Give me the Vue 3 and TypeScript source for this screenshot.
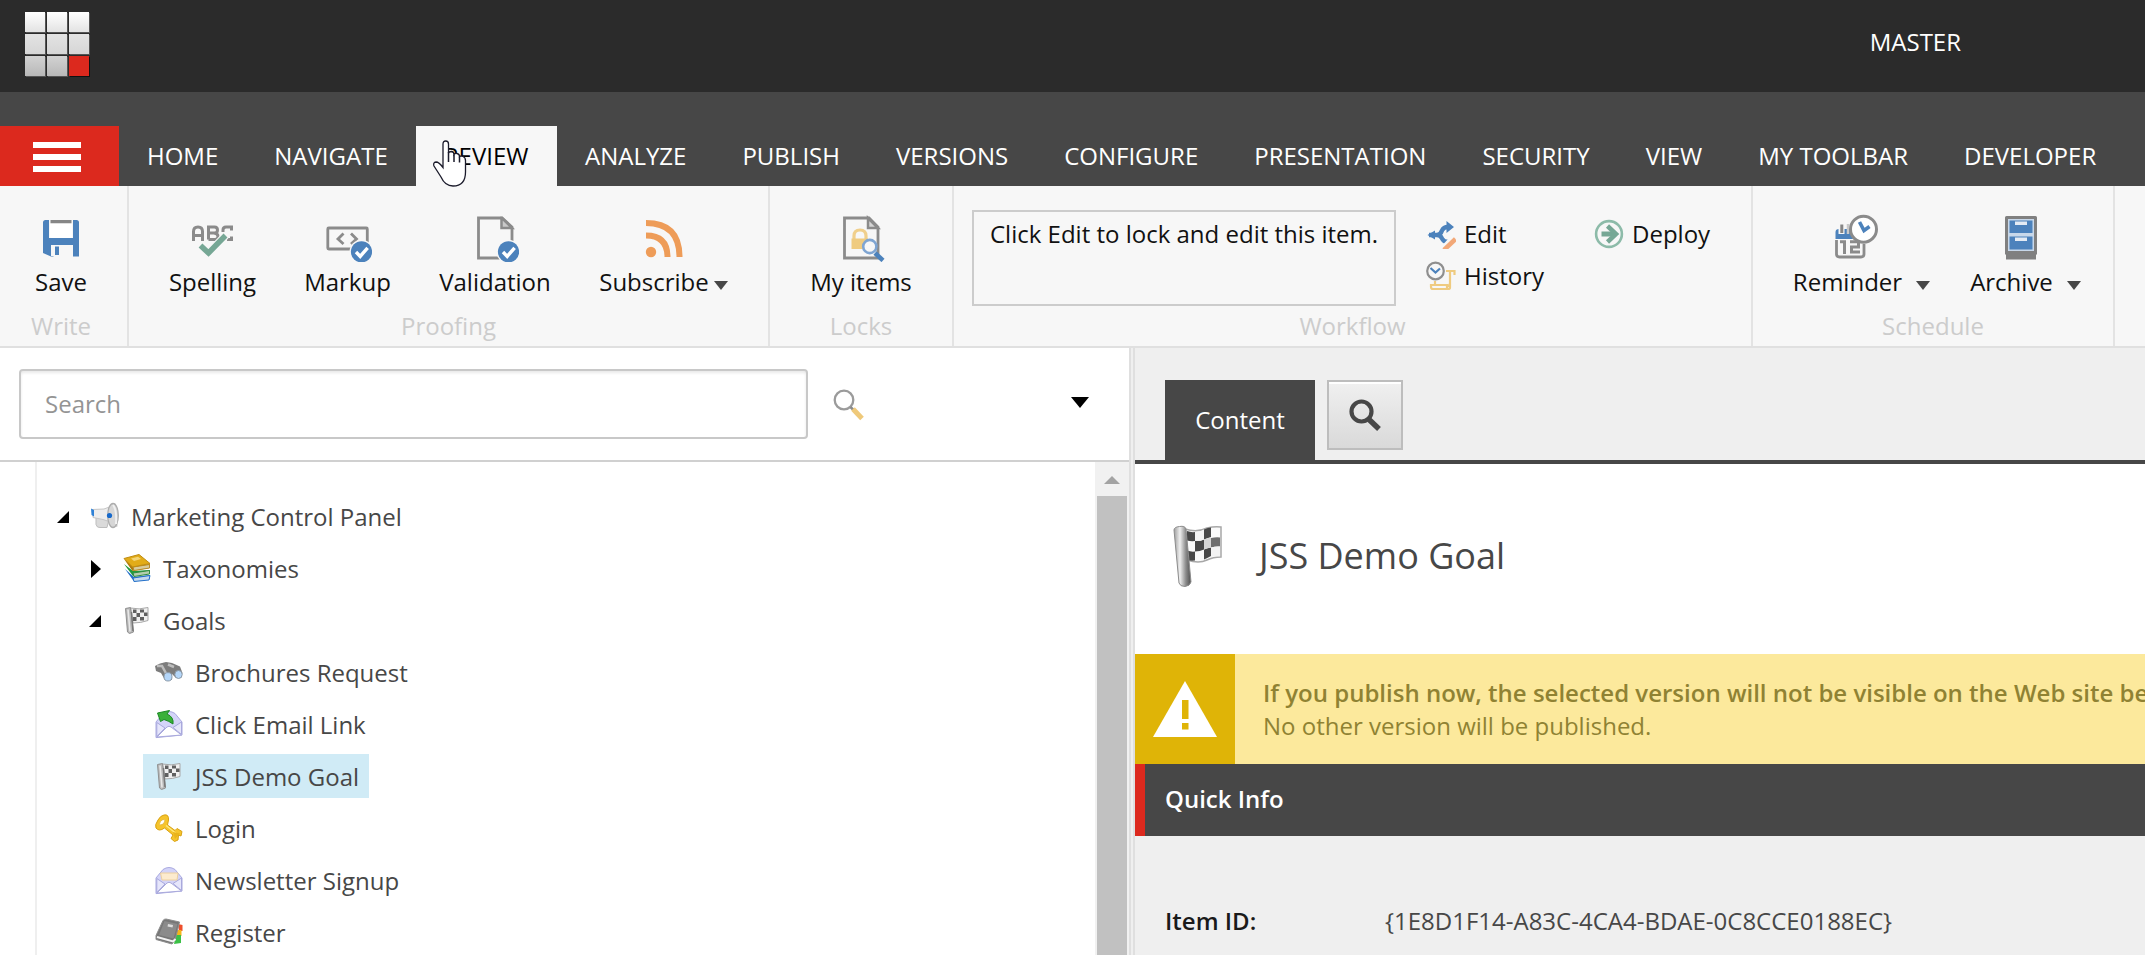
<script setup lang="ts">
interface TreeNode {
  label: string
  icon: string
  level: number
  state?: 'open' | 'closed'
  selected?: boolean
}

const tabs: string[] = [
  'HOME', 'NAVIGATE', 'REVIEW', 'ANALYZE', 'PUBLISH', 'VERSIONS', 'CONFIGURE',
  'PRESENTATION', 'SECURITY', 'VIEW', 'MY TOOLBAR', 'DEVELOPER',
]
const activeTab = 'REVIEW'

const tree: TreeNode[] = [
  { label: 'Marketing Control Panel', icon: 'megaphone', level: 0, state: 'open' },
  { label: 'Taxonomies', icon: 'books', level: 1, state: 'closed' },
  { label: 'Goals', icon: 'flag', level: 1, state: 'open' },
  { label: 'Brochures Request', icon: 'binoculars', level: 2 },
  { label: 'Click Email Link', icon: 'mailArrow', level: 2 },
  { label: 'JSS Demo Goal', icon: 'flag', level: 2, selected: true },
  { label: 'Login', icon: 'key', level: 2 },
  { label: 'Newsletter Signup', icon: 'mail', level: 2 },
  { label: 'Register', icon: 'notebook', level: 2 },
]

const badge = `<circle cx="37.5" cy="37.8" r="10.6" fill="#4c82bc"/><path d="M32 38l4.2 4.4 7.4-8.6" fill="none" stroke="#fff" stroke-width="3.4"/>`
const envelope = `<path d="M1 12 8 3.5Q14-.5 20 3.5L27 12V25L1 27.6Z" fill="#d4d4f8" stroke="#a9a9e0"/><path d="M1.8 12.5 10 18 1.8 26.5Z M26.5 12 18 17.5 26.5 24.5Z" fill="#e6e6fb" stroke="#a9a9dc"/><path d="M2 27 12 17Q14 15.5 16 17L26.5 25Z" fill="#fff" stroke="#a9a9dc"/>`

/* Ribbon icons use a 48-unit box, tree icons a 28-unit box. */
const icons: Record<string, string> = {
  save: `<path d="M6.5 6H12V24H36V6H39.5Q42 6 42 8.500V42.500H36V31H16.500V42.500H14L6 39V8.500Q6 6 8.500 6Z" fill="#4c82bc"/><path d="M13.500 6H34.500V9.500H13.500Z" fill="#868686"/><path d="M13 9.500H35V22.500Q35 24 33.500 24H14.500Q13 24 13 22.500Z" fill="#fff"/><path d="M14 31H33V42H14Z" fill="#f7f7f7"/><path d="M18 32.500H22V41H18Z" fill="#4c82bc"/>`,
  spelling: `<g fill="none" stroke="#8b8b8b" stroke-width="3"><path d="M4.500 27V17.500Q4.500 13 9 13Q13.500 13 13.500 17.500V27M4.500 21.500H13.500M19.500 25.500V13H25.500Q28.500 13 28.500 16Q28.500 19 25.500 19H19.500M25 19Q29 19.500 29 22.500Q29 25.500 25.500 25.500H19.500M34 18V16Q34 13 37 13H42.500V16.500M42.500 22.500V25.500H38"/></g><path d="M12 31.500 19.500 39.500 36.500 21.500" fill="none" stroke="#f7f7f7" stroke-width="8"/><path d="M11.500 31.500 19.500 39 36.500 21.500" fill="none" stroke="#76a795" stroke-width="5.500"/>`,
  markup: `<rect x="3.800" y="14" width="39.500" height="21" rx="1" fill="none" stroke="#8b8b8b" stroke-width="2.800"/><path d="M19.500 19.500 14 25 19.500 30M27 19.500 32.500 25 27 30" fill="none" stroke="#8b8b8b" stroke-width="2.800"/><circle cx="37.500" cy="37.800" r="12" fill="#f7f7f7"/>${badge}`,
  validation: `<path d="M7.500 4H31L41 13V44H7.500Z" fill="none" stroke="#8b8b8b" stroke-width="2.800"/><path d="M30.500 4V14H41L31 4Z" fill="#c9c9c9" stroke="#8b8b8b" stroke-width="2.500"/><circle cx="37.500" cy="37.800" r="12" fill="#f7f7f7"/>${badge}`,
  subscribe: `<circle cx="11" cy="38" r="5.200" fill="#ee9c58"/><path d="M6 21.500Q27.500 21.500 27.500 43M6 9Q39.500 9 39.500 43" fill="none" stroke="#ee9c58" stroke-width="6"/>`,
  lockdoc: `<path d="M7.500 4H32L41 13V44H7.500Z" fill="none" stroke="#8b8b8b" stroke-width="2.800"/><path d="M31 4V14H41Z" fill="#d5d5d5" stroke="#8b8b8b" stroke-width="2.500"/><path d="M17 25V22Q17 16 23 16Q29 16 29 22V25" fill="none" stroke="#f0cf8b" stroke-width="3.200"/><path d="M14.500 24.500H31V35H14.500Z" fill="#efcb80"/><circle cx="32.800" cy="32.500" r="6.600" fill="#f7f7f7" stroke="#7fa5d2" stroke-width="2.600"/><path d="M38 39 46 46.500" stroke="#4c82bc" stroke-width="4.500"/>`,
  reminder: `<path d="M4.500 18Q4.500 15 8 15H19L22 25H4.500Z" fill="#4c82bc"/><path d="M10.500 9.500V20" stroke="#f7f7f7" stroke-width="6"/><path d="M10.800 10.500V19" stroke="#868686" stroke-width="3"/><path d="M17 10V20" stroke="#c9c9c9" stroke-width="2.500"/><path d="M5.500 26V40Q5.500 43 8.500 43H30Q33 43 33 40V30" fill="none" stroke="#8b8b8b" stroke-width="2.800"/><path d="M9 27.800H13.500V40M19 27.800H27.500V33H20.500V38H29" fill="none" stroke="#8b8b8b" stroke-width="3"/><circle cx="32.500" cy="15.200" r="13" fill="#fff" stroke="#8b8b8b" stroke-width="3"/><path d="M28.500 8 33 16.500 38.500 12.500" fill="none" stroke="#4c82bc" stroke-width="3.600"/>`,
  archive: `<path d="M8 3.500Q8 2 9.500 2H38.500Q40 2 40 3.500V40.500H39V45.500H9V40.500H8Z" fill="#808080"/><path d="M11 5H37V37H11Z" fill="#c8d8ea"/><path d="M12.500 6.500H35.500V19H12.500ZM12.500 22.500H35.500V35.500H12.500Z" fill="#4c82bc"/><path d="M18 7.500H30V11H18ZM18 23.500H30V27H18Z" fill="#e4ebf4"/>`,
  edit: `<path d="M3 16H12M11 16Q14.500 16 16 11.500Q17.500 8 22 8H23M11 16Q14.500 16 16 19.500Q17.500 23 22 23H26" fill="none" stroke="#4c82bc" stroke-width="4.400"/><path d="M1.500 16 9 11.500V20.500ZM20.500 2 28 8 20.500 14Z" fill="#4c82bc"/><path d="M30 16.500 18 29.500" stroke="#f7f7f7" stroke-width="7"/><path d="M29.500 20 18 31" stroke="#f2a878" stroke-width="4.500"/>`,
  history: `<path d="M20 10H28.500V14M24 11V22Q24 24 22 25M9 20V24M24 12V26.500Q24 28 22 28H7Q5 28 5 26V24H21V27" fill="none" stroke="#efcb80" stroke-width="2.200"/><circle cx="9.500" cy="10" r="9.500" fill="#f7f7f7"/><circle cx="9.500" cy="10" r="8.300" fill="#f7f7f7" stroke="#8f8f8f" stroke-width="2.200"/><path d="M4.500 7 9.500 11.500 14 7.500" fill="none" stroke="#4c82bc" stroke-width="2.200"/>`,
  deploy: `<circle cx="15" cy="15" r="12.900" fill="none" stroke="#8dbba9" stroke-width="2.600"/><path d="M7.500 15H20" stroke="#76a795" stroke-width="5"/><path d="M13.500 7 22 15 13.500 23" fill="none" stroke="#76a795" stroke-width="4.500"/>`,
  megaphone: `<path d="M5 15V22.500Q6 26 9 25.500H16L18 17Z" fill="#dadada" stroke="#bdbdbd"/><path d="M1.500 7.500 13 7Q19 5.500 24 1.500L26 24.500Q20 19 12 17.500L2 15.500Z" fill="#ededed" stroke="#c6c6c6"/><ellipse cx="22" cy="13.500" rx="5.300" ry="12" fill="#d6d6d6" stroke="#adadad" stroke-width="1.300"/><path d="M22 3Q26 8 25 22" fill="none" stroke="#f0f0f0" stroke-width="2"/><path d="M0 6.500 3 8V14.500L.5 13Z" fill="#2e81d6"/><circle cx="18.500" cy="13.500" r="2.600" fill="#1769cb"/>`,
  books: `<path d="M2 15 11 27.500 27 25V21L11 23Z" fill="#2370c9"/><path d="M10 24 27 21.500 26 26 11 27.500Z" fill="#c4d9ee" stroke="#2370c9"/><path d="M1 10 10 22 27 19.500V16L10 17Z" fill="#219a3d"/><path d="M10 19 26.500 16.500V20L11 22.500Z" fill="#b4ceae" stroke="#2f8d3f"/><path d="M1 5 9.500 17 27 14V10L10 12Z" fill="#ad7a0d"/><path d="M10 13 26.500 10.500V14L11 16.500Z" fill="#d8cc9c" stroke="#b88b29"/><path d="M1 4.500 16 .5 27 9.500 9.500 13Z" fill="#e2ac18" stroke="#c08c10"/><path d="M8 4.500 15 2.700 18 5 11 7Z" fill="#f3d577"/>`,
  flag: `<path d="M7.500 2Q16 4 25 1.500V14.500Q18 17 10 17Z" fill="#f0f0f0" stroke="#a8a8a8"/><path d="M10 3.500H13.500V7H10ZM17 3.500H21V6.500H17ZM13.500 7H17V11H13.500ZM21 6.500H24.500V10H21ZM10 11H13.500V15H10ZM17 11H21V14.500H17Z" fill="#606060"/><path d="M2.500 2.500 7.500 1.500 10.500 26 6.500 27.500 4.500 26Z" fill="#b8b8b8" stroke="#909090"/><path d="M5 3.500 7 25.500" stroke="#e8e8e8" stroke-width="1.600"/><path d="M8.500 6 10 25" stroke="#787878" stroke-width="1.500"/>`,
  binoculars: `<path d="M0 8 5 5.500 11 4 17 5 25 8.500 27.500 15 26 20 21 20 17 16 17 22 10 22 6 15 1 13Z" fill="#7c7c7c"/><path d="M2 8 7 8 12 17M13 6.500 19 9" fill="none" stroke="#bdbdbd" stroke-width="2.500"/><ellipse cx="13" cy="18.800" rx="4" ry="4.200" fill="#b4d6f9" stroke="#8c9aa8"/><ellipse cx="23.500" cy="16.500" rx="3.700" ry="4" fill="#b4d6f9" stroke="#8c9aa8"/>`,
  mailArrow: `${envelope}<path d="M2.500 3 14.500.5 12 4Q19 7 18 14Q14 11 9 9.500L5.500 11.500Z" fill="#3ab03a" stroke="#1c8a24"/>`,
  mail: `${envelope}<path d="M5.500 7H23L22 14H7Z" fill="#fdebce" stroke="#ecd0a0"/>`,
  key: `<path d="M9 1Q14 0 13.500 6L12.500 11 20 16.500 22 14.500 27 17.500 26 22 23.500 21 23 26 19.500 27.500 16 24.500 18 21 9.500 14Q4 18 1 14Q-.5 11 3 6Q5.500 1.500 9 1Z" fill="#f6c42c" stroke="#d9a212"/><path d="M9 5.500Q10.500 5.500 9.500 8Q8 11 5.500 11Q3.500 10.500 5.500 7.500Q7 5.500 9 5.500Z" fill="#fff" stroke="#e0b23a" stroke-width=".8"/><path d="M11 11.500 21 19.500" stroke="#fde87c" stroke-width="1.500"/><path d="M18 18 25 19.500 20 25Z" fill="#eab41c"/>`,
  notebook: `<path d="M23 6 27.500 7V13L24 13Z" fill="#ee4f2c"/><path d="M22 12H26.500V18H21Z" fill="#f5b51b"/><path d="M21 17H26V25L19 26Z" fill="#3cc047"/><path d="M8 2.500Q9 1 11 1L24.500 4 20 22.500 17 26 1 21.500V17.500Z" fill="#777" stroke="#8d8d8d"/><path d="M9.500 3 22.500 6 18.500 20.500 4 17Z" fill="#8b8b8b"/><path d="M2 19 18 23.500 20.500 21" fill="none" stroke="#f3f3f3" stroke-width="2"/><path d="M13 6 18 7 17.500 9.500 12.500 8.500Z" fill="#ddd"/>`,
}
</script>

<template>
  <div class="app">
    <header class="topbar">
      <div class="logo">
        <span v-for="n in 9" :key="n" :class="['cell', `row${Math.ceil(n / 3)}`, { red: n === 9 }]"></span>
      </div>
      <span class="database">MASTER</span>
    </header>

    <nav class="tabs">
      <button class="menu" aria-label="Menu"><i></i><i></i><i></i></button>
      <div v-for="tab in tabs" :key="tab" :class="['tab', { active: tab === activeTab }]">
        {{ tab }}
        <svg v-if="tab === activeTab" class="cursor" viewBox="0 0 34 48">
          <path
            d="M10 26V5Q10 2 12.700 2Q15.500 2 15.500 5V14Q16 12.500 18.500 12.500Q21 12.800 21 15.500Q22 14 24 14.500Q26.500 15 26.500 17.500Q28 16.500 30 17.500Q32.500 18.500 32.500 21.500V33Q32.500 47 20 47Q12 47 8 38L1 27Q-.2 23.500 3 23Q6 23 10 28.500Z"
            fill="#fff" stroke="#1b1b2b" stroke-width="1.300" />
          <path d="M15.500 13V23M21 15.500V23M26.500 17.500V23.500" fill="none" stroke="#1b1b2b" stroke-width="1.500" />
        </svg>
      </div>
    </nav>

    <section class="ribbon">
      <div class="group write">
        <div class="tools">
          <div class="tool w-save"><svg viewBox="0 0 48 48" v-html="icons.save"></svg><span>Save</span></div>
        </div>
        <div class="caption">Write</div>
      </div>
      <div class="group proofing">
        <div class="tools">
          <div class="tool w-spelling"><svg viewBox="0 0 48 48" v-html="icons.spelling"></svg><span>Spelling</span></div>
          <div class="tool w-markup"><svg viewBox="0 0 48 48" v-html="icons.markup"></svg><span>Markup</span></div>
          <div class="tool w-validation"><svg viewBox="0 0 48 48" v-html="icons.validation"></svg><span>Validation</span></div>
          <div class="tool w-subscribe"><svg viewBox="0 0 48 48" v-html="icons.subscribe"></svg><span class="near">Subscribe<i class="caret"></i></span></div>
        </div>
        <div class="caption">Proofing</div>
      </div>
      <div class="group locks">
        <div class="tools">
          <div class="tool w-items"><svg viewBox="0 0 48 48" v-html="icons.lockdoc"></svg><span>My items</span></div>
        </div>
        <div class="caption">Locks</div>
      </div>
      <div class="group workflow">
        <div class="flow">
          <div class="hint">Click Edit to lock and edit this item.</div>
          <div class="links">
            <div class="link"><svg viewBox="0 0 30 30" v-html="icons.edit"></svg>Edit</div>
            <div class="link"><svg viewBox="0 0 30 30" v-html="icons.history"></svg>History</div>
          </div>
          <div class="links">
            <div class="link"><svg viewBox="0 0 30 30" v-html="icons.deploy"></svg>Deploy</div>
          </div>
        </div>
        <div class="caption">Workflow</div>
      </div>
      <div class="group schedule">
        <div class="tools">
          <div class="tool w-reminder"><svg viewBox="0 0 48 48" v-html="icons.reminder"></svg><span>Reminder<i class="caret"></i></span></div>
          <div class="tool w-archive"><svg viewBox="0 0 48 48" v-html="icons.archive"></svg><span>Archive<i class="caret"></i></span></div>
        </div>
        <div class="caption">Schedule</div>
      </div>
    </section>

    <main class="body">
      <aside class="side">
        <div class="searchbar">
          <div class="searchbox">Search</div>
          <svg class="glass" viewBox="0 0 32 32">
            <circle cx="11" cy="11" r="9.300" fill="#fff" stroke="#9b9b9b" stroke-width="2.300" />
            <path d="M17.500 18 20.500 21" stroke="#8b8b8b" stroke-width="2.500" />
            <path d="M20 20 29 29.500" stroke="#efc97a" stroke-width="5" />
          </svg>
          <i class="dropdown"></i>
        </div>
        <div class="treewrap">
          <div class="tree">
            <div v-for="node in tree" :key="node.label" :class="['node', `level${node.level}`]">
              <span class="toggle">
                <svg v-if="node.state" viewBox="0 0 22 20">
                  <path v-if="node.state === 'open'" d="M12 4V16H0Z" />
                  <path v-else d="M2 1 12 10 2 19Z" />
                </svg>
              </span>
              <span :class="['item', { selected: node.selected }]">
                <svg viewBox="0 0 28 28" v-html="icons[node.icon]"></svg>
                <span class="label">{{ node.label }}</span>
              </span>
            </div>
          </div>
          <div class="scrollbar"><i class="up"></i><div class="thumb"></div></div>
        </div>
      </aside>
      <div class="splitter"></div>
      <section class="content">
        <div class="editor-tabs">
          <div class="editor-tab">Content</div>
          <div class="search-button">
            <svg viewBox="0 0 32 32">
              <circle cx="12.500" cy="12.500" r="10" fill="none" stroke="#474747" stroke-width="4.200" />
              <path d="M19.500 20 30 30" stroke="#474747" stroke-width="5.500" />
            </svg>
          </div>
        </div>
        <div class="title">
          <svg viewBox="0 0 50 64">
            <path d="M12 5Q24 9 34 4Q42 2 48 3V33Q40 33 34 36Q26 40 14 36Z" fill="#fafafa" stroke="#a8a8a8" stroke-width="1.500" />
            <path d="M14 7Q18 8.500 22 8V17Q18 17.500 14 16.500ZM31 5.500Q35 3.500 38 3.500V13Q34 14 31 15.500ZM22 17Q27 17.500 31 15.500V25.500Q27 27.500 22 27.500ZM14 26.500Q18 28 22 27.500V36.500Q18 37 14 36ZM31 25.500Q35 24 38 23.500V32Q34 34 31 35.500Z" fill="#484848" />
            <path d="M38 14Q43 13 47 13.500V22.500Q43 22 38 23.500Z" fill="#6e6e6e" />
            <path d="M31 15.500Q35 14 38 13.500V23.500Q34 24 31 25.500Z" fill="#d6d6d6" />
            <path d="M22 8Q27 8 31 5.500V15.500Q27 17.500 22 17ZM38 23.500Q43 22 47 22.500V32Q43 32 38 32.500Z" fill="#f3f3f3" />
            <defs>
              <linearGradient id="pole" x1="0" x2="1" y1="0" y2="0">
                <stop offset="0" stop-color="#9d9d9d" /><stop offset=".35" stop-color="#efefef" />
                <stop offset=".7" stop-color="#8b8b8b" /><stop offset="1" stop-color="#4d4d4d" />
              </linearGradient>
            </defs>
            <path d="M1 6Q1 3 6.500 2.500Q12 1.500 13 5L18 58Q17 62 12 62.500Q7 62.500 6 59Z" fill="url(#pole)" stroke="#8c8c8c" />
          </svg>
          <h1>JSS Demo Goal</h1>
        </div>
        <div class="warning">
          <div class="warning-icon">
            <svg viewBox="0 0 66 58">
              <path d="M33 1 65 57H1Z" fill="#fff" />
              <path d="M30 20H36.500V39H30ZM30 43H36.500V49.500H30Z" fill="#dfb407" />
            </svg>
          </div>
          <div class="warning-text">
            <b>If you publish now, the selected version will not be visible on the Web site be</b>
            <span>No other version will be published.</span>
          </div>
        </div>
        <div class="section-head">Quick Info</div>
        <dl class="info">
          <dt>Item ID:</dt>
          <dd>{1E8D1F14-A83C-4CA4-BDAE-0C8CCE0188EC}</dd>
        </dl>
      </section>
    </main>
  </div>
</template>

<style>
html, body { margin: 0; overflow: hidden; }
</style>

<style scoped>
.app {
  width: 2145px;
  height: 955px;
  display: flex;
  flex-direction: column;
  overflow: hidden;
  font: 24px/32px "Open Sans", "Noto Sans", sans-serif;
  color: #474747;
  background: #fff;
  white-space: nowrap;
}
.app *, .app { box-sizing: border-box; }

.topbar {
  flex: 0 0 92px;
  display: flex;
  align-items: flex-start;
  justify-content: space-between;
  padding: 12px 184px 0 25px;
  background: #2b2b2b;
  color: #fff;
}
.logo { display: grid; grid-template-columns: repeat(3, 20px); grid-auto-rows: 20px; gap: 2px; }
.cell { box-shadow: 1px 1px 0 #555; }
.row1 { background: linear-gradient(#fff, #e3e3e3); }
.row2 { background: linear-gradient(#e3e3e3, #d6d6d6); }
.row3 { background: linear-gradient(#d2d2d2, #b8b8b8); }
.cell.red { background: #dc291e; box-shadow: 1px 1px 0 #111; }
.database { margin-top: 14px; }

.tabs {
  flex: 0 0 94px;
  display: flex;
  padding-top: 34px;
  background: #474747;
  color: #fff;
}
.menu {
  width: 119px;
  padding: 1px 38px 0 33px;
  border: 0;
  background: #dc291e;
  display: flex;
  flex-direction: column;
  justify-content: center;
  gap: 6px;
}
.menu i { height: 6px; background: #fff; }
.tab { position: relative; padding: 0 28px; line-height: 60px; }
.tab.active { padding-right: 28.6px; background: #f7f7f7; color: #000; }
.cursor { position: absolute; left: 17px; top: 13px; width: 34px; height: 48px; }

.ribbon {
  flex: 0 0 162px;
  display: flex;
  background: #f7f7f7;
  border-bottom: 2px solid #e0e0e0;
  color: #111;
}
.group { flex: none; display: flex; flex-direction: column; border-right: 2px solid #e3e3e3; }
.write { width: 129px; }
.proofing { width: 641px; }
.locks { width: 184px; }
.workflow { width: 799px; }
.schedule { width: 362px; }
.tools, .flow { height: 124px; display: flex; align-items: flex-start; }
.tools { padding-top: 28px; }
.caption { text-align: center; color: #ccc; }
.write .caption { padding-right: 5px; }
.tool { display: flex; flex-direction: column; align-items: center; }
.tool svg { width: 48px; height: 48px; margin-bottom: 4px; }
.tool span { display: flex; align-items: center; gap: 14px; }
.tool span.near { gap: 5px; }
.caret {
  width: 0;
  margin-top: 7px;
  border: solid transparent;
  border-width: 9px 7.5px 0;
  border-top-color: #474747;
}
.w-save { width: 122px; }
.proofing .tools { padding-left: 16px; }
.w-spelling, .w-markup { width: 135px; }
.w-validation { width: 160px; }
.w-subscribe { width: 177px; }
.w-items { width: 184px; }
.w-reminder { width: 217px; }
.w-archive { width: 111px; }
.w-reminder svg { margin-left: -14px; }
.w-archive svg { margin-left: -10px; }
.flow { padding: 24px 0 0 18px; }
.hint { flex: none; width: 424px; height: 96px; border: 2px solid #ccc; padding: 6px 16px; }
.links { flex: none; width: 168px; margin: 3px 0 0 30px; }
.links + .links { width: 140px; margin-left: 0; }
.link { display: flex; align-items: center; gap: 8px; height: 42px; line-height: 42px; }
.link svg { width: 30px; height: 30px; }

.body { flex: 1; display: flex; min-height: 0; }
.side { width: 1129px; display: flex; flex-direction: column; }
.searchbar {
  flex: 0 0 114px;
  display: flex;
  align-items: flex-start;
  padding: 21px 40px 0 19px;
  border-bottom: 2px solid #d0d0d0;
}
.searchbox {
  width: 789px;
  height: 70px;
  padding: 0 24px;
  line-height: 66px;
  border: 2px solid #c8c8c8;
  border-radius: 4px;
  box-shadow: inset 0 2px 3px #e9e9e9;
  color: #949494;
}
.glass { width: 32px; height: 32px; margin: 20px 0 0 25px; }
.dropdown {
  margin: 28px 0 0 auto;
  border: solid transparent;
  border-width: 11px 9.5px 0;
  border-top-color: #000;
}
.treewrap { flex: 1; display: flex; min-height: 0; }
.tree { flex: 1; margin-left: 35px; padding-top: 28px; border-left: 2px solid #efefef; overflow: hidden; }
.node { display: flex; align-items: center; height: 52px; }
.level0 { padding-left: 20px; }
.level1 { padding-left: 52px; }
.level2 { padding-left: 84px; }
.toggle { width: 22px; height: 20px; display: flex; }
.toggle svg { width: 22px; height: 20px; margin-top: 1px; }
.item { display: flex; align-items: center; gap: 12px; height: 44px; padding: 0 10px 0 12px; }
.item svg { width: 28px; height: 28px; overflow: visible; }
.label { padding-top: 2px; }
.selected { background: #d0ebf6; }
.scrollbar { width: 34px; padding: 14px 2px 0; background: #f1f1f1; display: flex; flex-direction: column; align-items: center; }
.up { border: solid transparent; border-width: 0 8px 8px; border-bottom-color: #a3a3a3; }
.thumb { flex: 1; align-self: stretch; margin-top: 12px; background: #c1c1c1; }
.splitter { width: 6px; background: #efefef; border: solid #dfdfdf; border-width: 0 2px; }

.content { flex: 1; min-width: 0; display: flex; flex-direction: column; background: #efefef; overflow: hidden; }
.editor-tabs {
  flex: 0 0 116px;
  display: flex;
  align-items: flex-start;
  gap: 12px;
  padding: 32px 0 0 30px;
  border-bottom: 4px solid #474747;
}
.editor-tab { width: 150px; height: 80px; line-height: 79px; text-align: center; background: #474747; color: #fff; }
.search-button {
  width: 76px;
  height: 70px;
  border: 2px solid #bdbdbd;
  box-shadow: inset 0 2px 0 #fff;
  background: linear-gradient(#f0f0f0, #d9d9d9);
  display: flex;
  align-items: center;
  justify-content: center;
}
.search-button svg { width: 32px; height: 32px; }
.title { flex: 0 0 190px; display: flex; align-items: center; gap: 36px; padding: 0 0 6px 38px; background: #fff; }
.title svg { width: 50px; height: 64px; margin-top: -1px; }
.title h1 { margin: 0; font-size: 36px; line-height: 50px; font-weight: 400; }
.warning { flex: 0 0 110px; display: flex; background: #fce99c; color: #8f8233; }
.warning-icon { flex: 0 0 100px; background: #dfb407; display: flex; align-items: center; justify-content: center; }
.warning-icon svg { width: 66px; height: 58px; }
.warning-text { display: flex; flex-direction: column; justify-content: center; padding-left: 28px; line-height: 33px; }
.warning-text b { font-weight: 600; }
.section-head {
  flex: 0 0 72px;
  padding-left: 20px;
  border-left: 10px solid #dc291e;
  background: #474747;
  color: #fff;
  font-weight: 600;
  line-height: 70px;
}
.info { margin: 0; padding: 69px 0 0 30px; display: grid; grid-template-columns: 220px 1fr; }
.info dt { color: #1a1a1a; font-weight: 600; }
.info dd { margin: 0; }
</style>
